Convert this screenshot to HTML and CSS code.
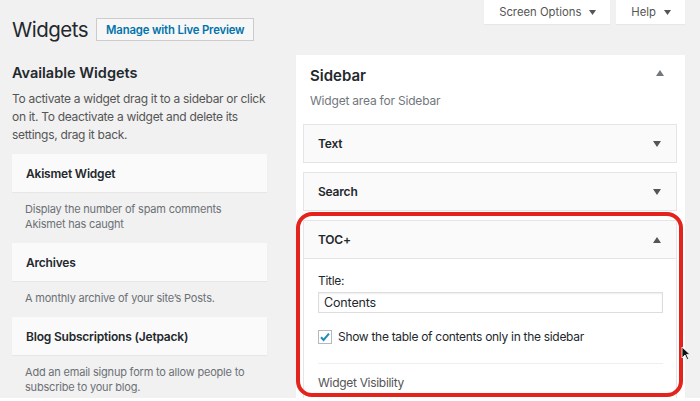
FILE: index.html
```html
<!DOCTYPE html>
<html lang="en">
<head>
<meta charset="utf-8">
<title>Widgets</title>
<link rel="stylesheet" href="styles.css">
</head>
<body>
<div class="page">
  <header class="top">
    <div class="title-row">
      <h1 class="title">Widgets</h1>
      <a class="btn-preview">Manage with Live Preview</a>
    </div>
    <div class="meta-links">
      <div class="tab">Screen Options <svg class="caret" width="7" height="5" viewBox="0 0 7 5"><path d="M0 0h7L3.5 5z" fill="#555"/></svg></div>
      <div class="tab">Help <svg class="caret" width="7" height="5" viewBox="0 0 7 5"><path d="M0 0h7L3.5 5z" fill="#555"/></svg></div>
    </div>
  </header>

  <main class="cols">
    <section class="available">
      <h2 class="avail-title">Available Widgets</h2>
      <p class="avail-desc">To activate a widget drag it to a sidebar or click on it. To deactivate a widget and delete its settings, drag it back.</p>

      <div class="wcard">Akismet Widget</div>
      <p class="wdesc">Display the number of spam comments Akismet has caught</p>

      <div class="wcard">Archives</div>
      <p class="wdesc">A monthly archive of your site’s Posts.</p>

      <div class="wcard">Blog Subscriptions (Jetpack)</div>
      <p class="wdesc">Add an email signup form to allow people to subscribe to your blog.</p>
    </section>

    <section class="sidebar">
      <div class="sb-head">
        <h2 class="sb-title">Sidebar</h2>
        <svg class="sb-arrow" width="8" height="6" viewBox="0 0 8 6"><path d="M0 6h8L4 0z" fill="#72777c"/></svg>
      </div>
      <p class="sb-desc">Widget area for Sidebar</p>

      <div class="widget">
        <div class="widget-top"><span>Text</span><svg width="8" height="6" viewBox="0 0 8 6"><path d="M0 0h8L4 6z" fill="#555"/></svg></div>
      </div>
      <div class="widget">
        <div class="widget-top"><span>Search</span><svg width="8" height="6" viewBox="0 0 8 6"><path d="M0 0h8L4 6z" fill="#555"/></svg></div>
      </div>
      <div class="widget open">
        <div class="widget-top"><span>TOC+</span><svg width="8" height="6" viewBox="0 0 8 6"><path d="M0 6h8L4 0z" fill="#555"/></svg></div>
        <div class="widget-inside">
          <label class="field-label">Title:</label>
          <div class="text-input">Contents</div>
          <div class="check-row">
            <span class="checkbox"><svg width="12" height="12" viewBox="0 0 12 12"><path d="M2 6.2l2.6 2.8L10 2.6" fill="none" stroke="#1e8cbe" stroke-width="2"/></svg></span>
            <span>Show the table of contents only in the sidebar</span>
          </div>
          <div class="divider"></div>
          <div class="visibility">Widget Visibility</div>
        </div>
      </div>
    </section>
  </main>

  <div class="highlight"></div>
  <svg class="cursor" width="9" height="14" viewBox="0 0 9 14"><path d="M1 1v11l3-3 2 4.5 1.6-.8-2-4.3H9z" fill="#111" stroke="#fff" stroke-width="0.8"/></svg>
</div>
</body>
</html>
```

FILE: styles.css
```css
* { box-sizing: border-box; }
html, body { margin: 0; padding: 0; }
body {
  background: #f1f1f1;
  font-family: Inter, "Noto Sans", "Liberation Sans", sans-serif;
  color: #23282d;
  width: 700px;
  height: 401px;
  overflow: hidden;
}
.page { position: relative; width: 700px; height: 401px; }
.page::after {
  content: "";
  position: absolute;
  left: 0;
  right: 0;
  bottom: 0;
  height: 3px;
  background: #fff;
}

.top {
  display: flex;
  justify-content: space-between;
  align-items: flex-start;
  padding: 0 15px 0 12px;
}
.title-row {
  display: flex;
  align-items: center;
  gap: 8px;
  margin-top: 18px;
}
.title {
  margin: 0;
  font-size: 20.5px;
  font-weight: 400;
  line-height: 23px;
  letter-spacing: -0.5px;
}
.btn-preview {
  display: flex;
  align-items: center;
  height: 23px;
  padding: 0 9px;
  border: 1px solid #ccc;
  background: #f7f7f7;
  color: #0073aa;
  font-size: 11.3px;
  font-weight: 600;
  letter-spacing: -0.15px;
}
.meta-links { display: flex; gap: 6px; }
.tab {
  display: flex;
  align-items: center;
  gap: 8px;
  height: 24px;
  padding: 0 14px 0 15px;
  background: #fff;
  color: #555;
  font-size: 11.3px;
  box-shadow: 0 1px 1px rgba(0,0,0,.04);
}

.cols {
  display: flex;
  gap: 29px;
  margin-top: 14px;
  padding: 0 15px 0 12px;
}
.available { width: 255px; flex: none; }
.avail-title {
  margin: 8px 0 0;
  font-size: 14.5px;
  font-weight: 600;
  line-height: 20px;
}
.avail-desc {
  margin: 7px 0 10px;
  font-size: 12px;
  letter-spacing: -0.3px;
  line-height: 18px;
  color: #555;
}
.wcard {
  display: flex;
  align-items: center;
  height: 38px;
  padding: 0 14px;
  background: #fafafa;
  font-size: 12px;
  letter-spacing: -0.2px;
  font-weight: 600;
  box-shadow: 0 1px 1px rgba(0,0,0,.04);
}
.wdesc {
  margin: 0;
  padding: 10px 13px 11px;
  font-size: 11px;
  letter-spacing: -0.2px;
  line-height: 15px;
  color: #6c7075;
}

.sidebar {
  flex: 1;
  background: #fff;
  padding: 11px 8px 0 7px;
  box-shadow: 0 1px 1px rgba(0,0,0,.04);
}
.sb-head {
  display: flex;
  justify-content: space-between;
  align-items: center;
  padding: 0 13px 0 7px;
}
.sb-title {
  margin: 0;
  font-size: 15px;
  font-weight: 600;
  line-height: 20px;
}
.sb-arrow { margin-top: -6px; }
.sb-desc {
  margin: 6px 0 14px;
  padding-left: 7px;
  font-size: 12px;
  letter-spacing: -0.2px;
  line-height: 18px;
  color: #72777c;
}
.widget { margin-bottom: 9px; }
.widget-top {
  display: flex;
  justify-content: space-between;
  align-items: center;
  height: 39px;
  padding: 0 15px 0 14px;
  background: #fafafa;
  border: 1px solid #e5e5e5;
  font-size: 12px;
  letter-spacing: -0.2px;
  font-weight: 600;
}
.widget-inside {
  background: #fff;
  border: 1px solid #e5e5e5;
  border-top: none;
  padding: 13px 13px 20px 14px;
  font-size: 12px;
  letter-spacing: -0.3px;
  line-height: 18px;
}
.field-label { display: block; }
.text-input {
  margin-top: 2px;
  height: 21px;
  display: flex;
  align-items: center;
  padding: 0 5px;
  border: 1px solid #ddd;
  box-shadow: inset 0 1px 2px rgba(0,0,0,.07);
  font-size: 12.5px;
  letter-spacing: -0.15px;
}
.check-row {
  display: flex;
  align-items: center;
  gap: 6px;
  margin-top: 15px;
}
.checkbox {
  width: 14px;
  height: 14px;
  border: 1px solid #b4b9be;
  background: #fff;
  display: flex;
  align-items: center;
  justify-content: center;
}
.divider {
  margin-top: 17px;
  border-top: 1px solid #eee;
}
.visibility {
  margin-top: 10px;
  color: #555;
}

.highlight {
  position: absolute;
  left: 296px;
  top: 212px;
  width: 387px;
  height: 185px;
  border: 4px solid #e3231c;
  border-radius: 16px;
}
.cursor {
  position: absolute;
  left: 681px;
  top: 346px;
}
```
